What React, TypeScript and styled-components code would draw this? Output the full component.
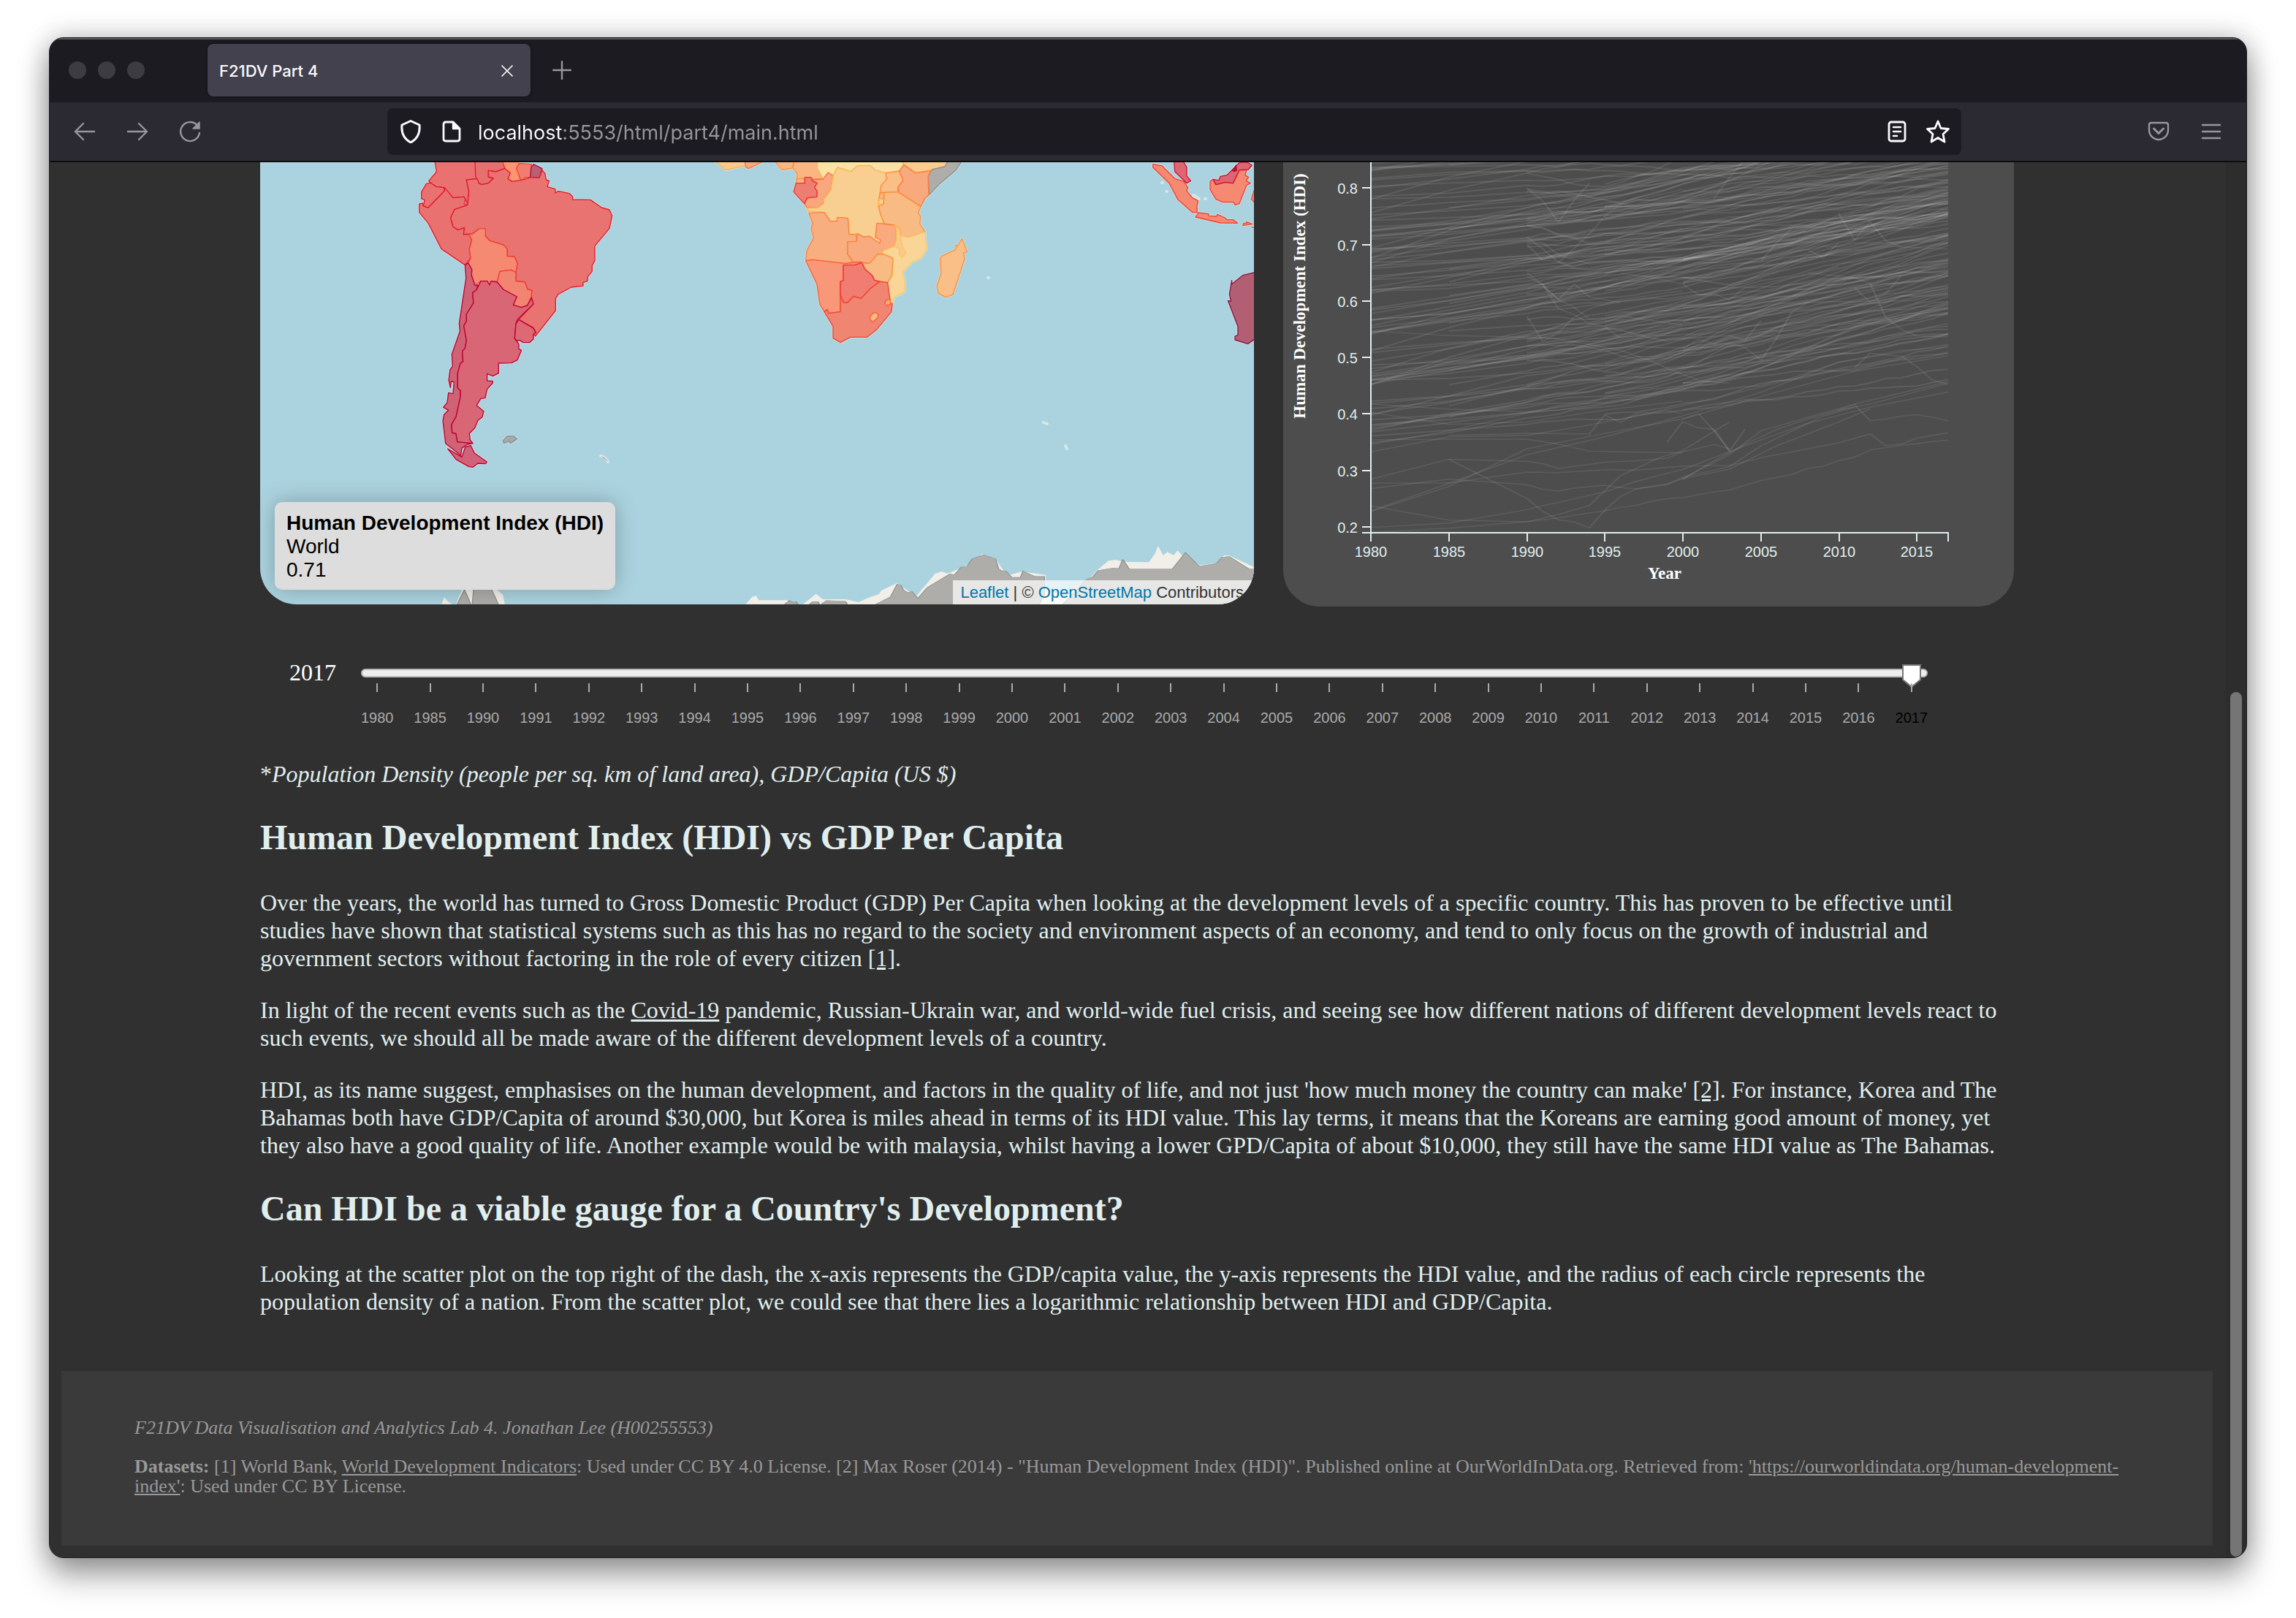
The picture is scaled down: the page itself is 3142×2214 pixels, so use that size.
import React, { useState } from "react";
import styled, { createGlobalStyle } from "styled-components";

const serif = `"Liberation Serif", "Times New Roman", serif`;
const sans = `"Liberation Sans", Helvetica, Arial, sans-serif`;
const chrome = `Inter, Roboto, sans-serif`;

const GlobalStyle = createGlobalStyle`
  *, *::before, *::after { box-sizing: border-box; }
  body { margin: 0; background: #fff; font-family: ${serif}; }
  h2, p { margin: 0; }
`;

/* ---------- browser window ---------- */

const Desktop = styled.div`
  padding: 51px 67px 83px;
`;

const BrowserWindow = styled.div`
  display: flex;
  flex-direction: column;
  border-radius: 20px;
  overflow: hidden;
  background: #303030;
  border: 1px solid #1b1b1b;
  box-shadow: inset 0 0 0 2px #5c5c5e, 0 24px 44px rgba(0, 0, 0, 0.36), 0 0 36px rgba(0, 0, 0, 0.24);
`;

const TabBar = styled.header`
  display: flex;
  align-items: center;
  gap: 24px;
  height: 88px;
  padding: 0 26px;
  background: #1c1b22;
  box-shadow: inset 0 2px 0 #5c5c5e;
`;

const TrafficLights = styled.div`
  display: flex;
  gap: 16px;
  width: 166px;
`;

const Light = styled.span`
  width: 24px;
  height: 24px;
  border-radius: 50%;
  background: #3d3c42;
`;

const Tab = styled.div`
  display: flex;
  align-items: center;
  justify-content: space-between;
  width: 442px;
  height: 72px;
  padding: 2px 16px 0;
  border-radius: 8px;
  background: #42414d;
  box-shadow: 0 0 4px rgba(0, 0, 0, 0.5);
  color: #fbfbfe;
  font: 500 22px ${chrome};
`;

const IconButton = styled.button<{ $tone?: string }>`
  display: flex;
  flex: none;
  padding: 0;
  border: 0;
  background: none;
  color: ${(p) => p.$tone ?? "#97969c"};
`;

const Toolbar = styled.nav`
  display: flex;
  align-items: center;
  justify-content: space-between;
  height: 82px;
  padding: 0 32px;
  background: #2b2a33;
  border-bottom: 2px solid #0c0c0d;
`;

const ToolGroup = styled.div<{ $end?: boolean }>`
  display: flex;
  gap: 40px;
  width: ${(p) => (p.$end ? 358 : 430)}px;
  justify-content: ${(p) => (p.$end ? "flex-end" : "flex-start")};
`;

const UrlBar = styled.div`
  display: flex;
  flex: 1;
  align-items: center;
  gap: 24px;
  height: 64px;
  padding: 0 16px;
  border-radius: 8px;
  background: #1c1b22;
`;

const UrlInput = styled.input`
  flex: 1;
  min-width: 0;
  height: 40px;
  margin-left: -4px;
  padding: 2px 0 0;
  border: 0;
  outline: 0;
  font: 400 27px ${chrome};
  color: transparent;
  background: linear-gradient(90deg, #fbfbfe 117px, #97969c 117px);
  -webkit-background-clip: text;
  background-clip: text;
`;

const Viewport = styled.div`
  display: flex;
  background: #303030;
`;

const Page = styled.div`
  flex: 1;
  padding: 0 18px 16px 16px;
`;

const ScrollTrack = styled.div`
  display: grid;
  grid-template-rows: 38fr 62fr;
  width: 28px;
  padding: 0 6px 1px;
  background: #2d2d2d;
`;

const ScrollThumb = styled.div`
  grid-row: 2;
  border-radius: 8px;
  background: #757575;
`;

/* ---------- article ---------- */

const Main = styled.main`
  max-width: 2400px;
  margin: 0 auto;
  color: #e0eeee;
`;

const Dashboard = styled.section`
  display: grid;
  grid-template-columns: 34fr 25fr;
  align-items: start;
  gap: 40px;
`;

const MapPanel = styled.div`
  position: relative;
  height: 605px;
  border-radius: 0 0 50px 50px;
  overflow: hidden;
  background: #abd3df;
`;

const Drawing = styled.svg`
  display: block;
  width: 100%;
  height: 100%;
`;

const MapInfo = styled.div`
  position: absolute;
  left: 20px;
  bottom: 20px;
  padding: 13px 16px 11px;
  border-radius: 10px;
  background: #ddd;
  box-shadow: 0 0 30px rgba(0, 0, 0, 0.25);
  color: #000;
  font: 28px/32px ${sans};
`;

const Attribution = styled.div`
  position: absolute;
  right: 0;
  bottom: 0;
  padding: 1px 14px 0 10px;
  background: rgba(255, 255, 255, 0.7);
  color: #333;
  font: 22px/32px ${sans};
  white-space: nowrap;
`;

const MapLink = styled.a`
  color: #0078a8;
  text-decoration: none;
`;

const ChartPanel = styled.div`
  height: 608px;
  border-radius: 0 0 50px 50px;
  overflow: hidden;
  background: #4d4d4d;
`;

const AxisText = styled.text`
  font: 20px ${sans};
  fill: #e0eeee;
`;

const AxisTitle = styled.text`
  font: bold 23px ${serif};
  fill: #fff;
  text-anchor: middle;
`;

const YearControl = styled.section`
  display: flex;
  padding: 71px 118px 47px 40px;
`;

const YearLabel = styled.label`
  width: 98px;
  color: #fff;
  font-size: 32px;
  line-height: 38px;
`;

const Slider = styled.div`
  flex: 1;
  padding-top: 14px;
`;

const Rail = styled.div`
  display: flex;
  align-items: flex-start;
  height: 12px;
  padding: 0 7px;
  border: 2px solid #bbb;
  border-radius: 6px;
  background: #eee;
`;

const thumbImage = `url("data:image/svg+xml,%3Csvg xmlns='http://www.w3.org/2000/svg' width='26' height='32'%3E%3Cpath d='M1 1H25V21L13 31L1 21Z' fill='white' stroke='%23777' stroke-width='2'/%3E%3C/svg%3E")`;

const Range = styled.input`
  appearance: none;
  flex: 1;
  height: 32px;
  margin: -8px 0;
  background: none;
  &::-webkit-slider-runnable-track {
    height: 32px;
    background: none;
  }
  &::-webkit-slider-thumb {
    appearance: none;
    width: 26px;
    height: 32px;
    background: ${thumbImage};
  }
`;

const Ticks = styled.div`
  display: grid;
  grid-template-columns: repeat(30, 1fr);
  margin: 8px -14px 0;
`;

const Tick = styled.span<{ $active: boolean }>`
  display: flex;
  flex-direction: column;
  align-items: center;
  gap: 24px;
  color: ${(p) => (p.$active ? "#000" : "#aaa")};
  font: 20px/22px ${sans};
  &::before {
    content: "";
    width: 2px;
    height: 12px;
    background: #aaa;
  }
`;

const Text = styled.p`
  font-size: 32px;
  line-height: 38px;
  & + & {
    margin-top: 33px;
  }
`;

const Heading = styled.h2`
  margin: 40px 0 42px;
  font-size: 48px;
  line-height: 56px;
`;

const TextLink = styled.a`
  color: inherit;
`;

const Footer = styled.footer`
  display: grid;
  gap: 26px;
  margin-top: 76px;
  padding: 64px 100px 68px;
  background: #3a3a3a;
  color: #999;
  font-size: 26px;
  line-height: 27px;
`;

/* ---------- icons ---------- */

const Icon = ({ children, size = 32 }: { children: React.ReactNode; size?: number }) => (
  <svg width={size} height={size} viewBox="0 0 32 32" fill="none" stroke="currentColor" strokeWidth="2.4" strokeLinecap="round" strokeLinejoin="round" aria-hidden="true">
    {children}
  </svg>
);

/* ---------- map ---------- */

type Shape = [points: string, fill: string, stroke: string];

const brick = "#e31a2c";
const crimson = "#bd0030";
const orange = "#fc8d3c";
const amber = "#fdb04c";
const tomato = "#f04030";

const southAmerica: Shape[] = [
  ["163,20 172,75 140,112 147,120 170,136 203,140 240,182 285,178 292,190 299,212 305,158 295,108 340,104 332,92 335,60 330,20", "#e97270", brick],
  ["330,20 332,92 340,118 358,128 385,122 406,102 385,96 385,70 415,75 453,62 440,20", "#e4706f", brick],
  ["440,20 455,56 475,80 465,104 482,115 518,110 500,76 512,20", "#fb9574", orange],
  ["512,40 500,60 518,110 532,106 536,98 558,98 562,44", "#ef7d70", tomato],
  ["570,44 606,62 594,100 558,98 560,60", "#bb5f73", "#a0103c"],
  ["147,120 170,136 203,140 205,154 138,223 118,216 123,190 110,186 110,158 130,124", "#e97270", brick],
  ["205,140 240,182 285,178 292,190 285,206 299,212 246,230 230,264 240,300 260,314 287,304 283,332 305,332 317,354 307,392 312,430 289,458 192,392 138,286 101,242 101,207 115,204 118,216 138,223 205,154", "#e97270", brick],
  ["295,108 340,104 345,122 358,128 385,122 406,102 385,96 385,70 415,75 453,62 475,80 465,104 482,115 518,110 532,106 558,98 594,100 606,68 618,82 622,108 635,112 627,136 660,146 660,162 672,154 718,164 731,176 731,189 804,190 850,222 882,231 893,256 882,308 822,380 822,440 811,460 811,484 793,506 792,524 774,530 774,544 726,549 672,578 661,596 661,645 578,750 570,741 580,735 570,716 510,682 568,620 560,592 564,562 546,558 535,528 498,524 498,486 504,450 492,424 462,422 462,392 448,376 390,358 373,340 373,308 348,308 318,330 283,332 287,304 260,314 240,300 230,264 246,230 299,212 305,158", "#e87370", brick],
  ["305,332 320,330 348,308 373,308 373,340 390,358 448,376 462,392 462,422 492,424 504,450 498,488 478,478 432,484 421,526 396,524 390,540 380,524 354,524 330,542 316,500 317,476 302,450 312,430 307,392 317,354", "#f58972", tomato],
  ["432,484 478,478 498,488 498,524 535,528 546,558 564,562 560,592 545,624 521,632 487,622 502,588 446,558 421,528", "#f28472", tomato],
  ["289,458 302,450 317,476 316,500 330,542 342,540 336,560 320,572 324,614 295,660 295,688 284,708 295,768 289,800 278,812 281,854 270,862 259,902 259,962 271,974 270,1000 252,1082 234,1112 236,1146 252,1150 258,1184 322,1190 300,1194 276,1210 272,1240 209,1190 198,1096 203,1072 221,1054 200,1042 216,1022 221,982 240,986 244,938 232,936 229,962 222,930 228,886 238,874 235,824 268,730 265,698 293,512", "#cf6274", crimson],
  ["354,524 380,524 390,540 396,524 421,528 446,558 502,588 487,622 521,632 545,624 562,592 570,618 504,682 498,700 493,760 510,782 510,802 521,808 504,848 480,860 427,861 427,902 403,914 380,904 380,933 403,934 403,942 380,968 372,1004 354,1006 337,1034 366,1058 360,1082 342,1096 330,1126 307,1150 310,1176 322,1190 258,1184 252,1150 236,1146 234,1112 252,1082 270,1000 271,974 259,962 259,902 270,862 281,854 278,812 289,800 295,768 284,708 295,688 295,660 324,614 320,572 336,560", "#d96674", crimson],
  ["510,682 568,716 580,735 570,741 570,762 554,776 528,776 512,766 504,770 493,760 498,700", "#de6873", crimson],
  ["218,1212 276,1246 290,1206 312,1198 328,1230 379,1266 374,1274 342,1272 322,1288 305,1286 252,1256", "#d0627a", crimson],
  ["444,1180 462,1160 490,1160 503,1172 476,1190 470,1182 449,1190", "#a4a9aa", "#8b9092"],
];

const africa: Shape[] = [
  ["40,20 100,68 178,50 178,20", "#fbc98a", amber],
  ["178,20 181,56 193,62 248,36 248,20", "#f9a77e", "#fb6e3c"],
  ["290,20 330,68 372,60 385,20", "#f9b882", orange],
  ["385,20 374,58 394,86 390,104 498,104 478,60 480,20", "#f9b582", orange],
  ["480,20 478,60 500,102 520,78 540,92 558,57 612,74 640,50 695,50 712,68 756,80 812,72 830,44 815,20", "#f9e2a4", "#fbe08a"],
  ["812,20 830,44 878,80 942,70 998,54 1020,20", "#fbcc8c", amber],
  ["1020,20 998,54 946,66 930,94 935,170 980,122 1045,68 1070,30", "#aeadaa", "#8e8e8e"],
  ["390,104 424,104 424,122 388,122", "#f9b582", orange],
  ["520,78 540,92 530,150 500,190 502,204 476,224 432,222 422,206 434,184 474,178 474,154 464,140 474,122 450,108 498,106", "#f8a77e", "#fb7040"],
  ["424,98 450,98 454,112 474,122 464,140 474,154 474,178 434,182 422,206 378,158 388,122 424,122", "#ef7e72", "#ee3030"],
  ["558,57 612,74 640,50 695,50 712,68 756,80 760,106 738,130 733,160 727,190 727,218 735,250 750,288 720,286 714,344 734,354 732,370 690,340 664,342 640,328 606,332 601,266 558,262 556,278 528,278 504,242 440,238 432,224 476,224 502,204 500,190 530,150 540,92", "#f8cf90", amber],
  ["756,80 812,72 828,110 806,140 806,158 750,160 733,162 738,130 760,106", "#f9bf86", orange],
  ["830,46 878,80 942,70 930,94 933,170 918,184 900,218 810,160 806,140 828,110 812,72", "#f9a97e", "#fb7a3c"],
  ["733,162 750,160 748,185 728,188", "#f9b582", orange],
  ["728,188 748,186 748,206 736,218 727,216", "#f9cf90", amber],
  ["750,160 806,158 900,218 890,244 900,260 896,288 918,322 852,344 818,340 814,308 790,294 750,288 735,250 727,218 748,206", "#f9bb84", orange],
  ["440,244 504,242 528,278 556,278 558,262 601,266 606,332 637,334 635,362 600,362 600,414 622,444 590,452 456,436 428,440 432,398 460,346 450,310 456,286", "#f9ae80", "#fb8040"],
  ["720,286 790,294 799,310 799,354 790,382 745,400 745,412 722,414 690,452 660,446 622,444 600,414 600,362 635,362 640,328 664,342 690,340 732,370 734,354 714,344", "#f9ab7f", "#fb8040"],
  ["790,294 814,308 822,372 840,394 838,412 824,428 812,418 812,390 790,380 799,354 799,310", "#f9c98c", amber],
  ["818,340 852,344 918,322 924,394 900,430 864,446 826,488 835,526 834,568 792,590 784,616 774,616 764,528 782,500 786,430 772,420 745,412 745,400 790,382 812,390 812,418 824,428 840,408 822,372", "#f9d597", "#fcc860"],
  ["664,450 690,452 722,414 750,414 786,430 782,500 764,530 710,520 700,500 670,474", "#f9bb84", orange],
  ["428,440 456,436 590,452 650,446 655,452 630,458 582,458 582,522 570,526 570,650 522,656 516,640 504,650 486,620 474,538", "#f99878", "#fa5c38"],
  ["582,458 630,458 658,448 670,474 700,500 710,520 732,526 692,556 655,596 625,586 600,612 582,612 570,580 570,526 582,522", "#f07c72", "#ee3030"],
  ["732,526 764,530 774,600 774,616 784,616 780,650 720,722 680,754 612,754 570,776 540,758 540,710 504,650 516,640 522,656 570,650 570,580 582,612 600,612 625,586 655,596 692,556", "#f08572", "#f04530"],
  ["774,598 758,602 752,614 762,626 776,618", "#f9a97e", "#fa5c38"],
  ["692,668 710,652 726,660 722,676 702,692 692,682", "#f9bb84", "#fa5c38"],
  ["1070,350 1091,404 1076,410 1080,434 1032,580 1002,590 972,574 966,544 984,490 979,436 984,422 1044,394 1044,376 1052,378", "#f9bf86", orange],
];

const asia: Shape[] = [
  ["233,45 270,50 323,103 360,115 377,140 372,154 395,182 419,194 414,216 415,242 396,242 336,190 300,122 233,57", "#f58972", tomato],
  ["319,20 323,74 372,122 389,112 372,92 372,56 350,20", "#dd6672", "#d01030"],
  ["468,114 480,106 492,128 530,118 562,122 588,68 618,68 612,88 626,98 616,112 634,122 618,130 588,206 570,212 564,200 520,200 492,188 468,148", "#f58972", tomato],
  ["480,106 504,110 510,94 538,88 590,36 620,36 640,48 625,66 588,68 562,122 530,118 492,128", "#dd6672", "#d01030"],
  ["560,70 575,48 577,70 566,74", "#b81030", "#b81030"],
  ["408,261 420,243 462,248 462,256 494,258 498,250 530,264 536,272 564,272 581,286 510,285", "#f58972", tomato],
  ["602,296 606,286 618,286 618,280 641,290", "#f58972", tomato],
  ["652,140 637,188 652,204", "#f58972", tomato],
  ["638,302 652,306", "none", tomato],
  ["652,488 602,500 557,536 557,520 547,578 554,606 541,604 582,710 582,745 570,750 570,765 623,782 652,762", "#b25f74", "#8c1240"],
];

const snow = [
  "762,500 772,470 778,466 782,484 826,484 836,500",
  "850,500 870,458 880,480 915,480 935,492 952,472 966,460 970,444 994,414 1010,444 1024,466 1052,376 1062,366 1072,374 1100,342 1125,294 1145,314 1156,358 1166,380 1186,366 1222,380 1222,440 1250,470 1290,392 1300,362 1318,322 1330,318 1340,326 1380,328 1390,290 1394,260 1402,300 1408,286 1418,300 1424,280 1432,304 1446,318 1458,340 1483,332 1495,300 1503,300 1541,348 1541,500",
  "296,500 300,472 306,490 312,500",
  "318,500 328,436 376,430 390,462 393,500",
];

const ice = [
  "320,500 331,440 341,500",
  "343,500 345,440 372,436 383,500",
  "822,500 829,485 834,492 840,490 842,500",
  "860,500 865,490 873,490 875,500",
  "878,500 886,485 915,488 918,500",
  "962,500 984,470 994,418 1000,422 1004,442 1010,452 1017,448 1026,476 1040,432 1075,376 1082,380 1092,348 1101,346 1109,314 1127,297 1145,314 1150,356 1154,362 1161,364 1170,390 1183,390 1187,364 1205,386 1220,386 1220,460 1212,500",
  "1248,500 1284,400 1294,388 1302,362 1326,352 1334,354 1340,316 1350,356 1416,356 1436,288 1457,344 1483,334 1492,308 1503,304 1534,356 1545,356 1545,500",
];

const Shapes = ({ shapes, x }: { shapes: Shape[]; x: number }) => (
  <g transform={`translate(${x} -12) scale(0.33333)`} strokeLinejoin="round">
    {shapes.map(([points]) => (
      <polygon key={"h" + points} points={points} fill="none" stroke="#e9f1ef" strokeOpacity="0.5" strokeWidth="9" />
    ))}
    {shapes.map(([points, fill, stroke]) => (
      <polygon key={points} points={points} fill={fill} stroke={stroke} strokeWidth="4" />
    ))}
  </g>
);

const WorldMap = () => (
  <Drawing viewBox="0 0 1360 605" preserveAspectRatio="xMidYMin slice" role="img" aria-label="Choropleth map">
    <Shapes shapes={southAmerica} x={184} />
    <Shapes shapes={africa} x={604} />
    <Shapes shapes={asia} x={1144} />
    <path d="M466 402q6 1 10 8M1072 356l5 2M1102 388l2 4M1234 28h1M1240 40h1M1277 45l8 5M1293 50h1M996 158h1" stroke="#e9efec" strokeOpacity="0.7" strokeWidth="4" strokeLinecap="round" />
    <g transform="translate(-16 438) scale(0.8929 0.33333)">
      {snow.map((p) => <polygon key={p} points={p} fill="#f2efe9" />)}
      {ice.map((p) => <polygon key={p} points={p} fill="#aeadaa" stroke="#8e8e8c" strokeWidth="1.5" />)}
    </g>
  </Drawing>
);

/* ---------- line chart ---------- */

const traces = [
  "205,1270 366,1256 527,1234 592,1222 656,1205 688,1198 720,1186 752,1180 784,1166 816,1157 848,1154 913,1134 945,1128 1010,1096 1074,1076 1106,1056 1138,1048 1170,1030 1203,1018 1235,994 1300,978 1332,973 1364,966 1396,961",
  "205,1181 366,1229 527,1235 592,1210 656,1180 720,1080 800,1020 848,996 945,900",
  "205,1254 366,1239 527,1194 560,1180 592,1170 688,1134 752,1100 816,1072 848,1060 945,1000 1010,960 1106,905 1235,850 1396,800",
  "205,1198 366,1106 527,1010 688,950 848,880 1010,800 1170,700 1396,640",
  "205,1200 366,1116 527,990 688,938 848,890 1042,800 1203,730 1396,678",
  "205,1105 366,1105 527,1068 592,1070 688,1060 752,1062 848,1048 945,1046 1010,1020 1170,970 1235,940 1267,979 1300,974 1332,954 1396,936",
  "366,1025 527,1157 560,1200 592,1228 624,1235 656,1255 688,1195 720,1150 752,1125 816,1110 848,1085 945,1050 1010,980 1074,930 1138,880 1203,850",
  "205,1123 366,1092 527,1110 560,1126 592,1131 624,1122 688,1112 720,1120 752,1124 816,1108 848,1090 945,1058 1042,980 1170,900 1235,856",
  "205,1092 366,1025 527,1032 560,1040 592,1056 688,1035 752,1030 816,1022 848,1000 913,976 945,990",
  "205,1000 366,950 527,945 656,910 784,870 913,820 1042,770 1170,700 1300,660 1396,650",
  "205,975 366,930 527,870 656,850 784,810 913,770 1042,700 1170,650 1300,600 1396,570",
  "366,945 527,938 656,940 688,876 720,902 752,872 816,862 848,872",
  "205,960 366,958 527,958 592,974 656,998 720,1000 848,1004",
  "816,968 848,900 881,920 913,924 945,998 977,924",
  "848,890 881,872 913,930 945,996",
  "205,840 366,857 527,866 592,860 720,830 848,780 945,740",
  "205,868 366,908 527,900 688,860 848,830",
  "205,595 366,610 527,616 592,622 656,640 720,660 784,696 816,720 848,740 881,760 913,766 945,770",
  "527,546 560,630 592,600 624,550 656,520 720,490 848,460",
  "527,240 560,252 592,270 624,285 656,305 720,300 848,290",
  "527,243 560,248 592,275 624,280 656,300 720,290 848,250",
  "527,280 560,320 592,365 624,385 656,390 848,350",
  "527,296 560,300 592,340 624,355 656,370 848,340",
  "527,305 560,358 592,362 624,380 656,364 848,360",
  "527,400 560,440 592,520 624,540 656,570 688,580 720,620 752,610 848,585",
  "527,455 560,445 592,490 624,515 656,555 720,545 848,575",
  "527,412 560,440 592,490 624,438 656,480 720,500",
  "527,115 560,160 592,230 624,158 656,100",
  "592,365 624,318 656,270 688,210 720,170 848,120",
  "848,655 881,624 913,638 945,610 977,626 1010,560",
  "913,640 945,636 977,650 1010,692 1042,620 1074,530 1106,500",
  "720,402 784,415 848,438 881,474 913,470 945,490 977,450 1170,380",
  "1010,360 1042,300 1074,250",
  "1106,322 1138,350 1170,300",
  "1170,200 1203,290 1235,230 1267,292 1300,314 1396,320",
  "1106,400 1203,416 1235,435 1267,548 1300,590 1332,612 1396,615",
  "1203,450 1235,498 1267,470 1300,408",
  "1203,718 1235,670 1300,680 1332,715 1364,760 1396,774",
  "1170,860 1203,842 1235,896 1267,890 1300,880 1332,876 1364,884 1396,896",
  "848,1093 881,1060 913,1030 977,975 1042,925 1106,890 1170,860 1235,840 1396,770",
  "848,1090 945,1010 1010,930 1074,900 1203,840 1396,765",
  "848,357 913,335 977,318 1042,310 1106,285 1203,262 1396,200",
  "848,360 945,325 1042,312 1106,290 1203,265 1396,205",
  "720,380 848,355 945,322 1042,305 1170,270",
  "848,770 945,760 1042,700 1138,630 1235,560 1396,515",
  "848,768 913,765 1010,720 1106,650 1203,580 1396,520",
  "913,150 945,80 977,20",
];

const random = (() => {
  let seed = 20170;
  return () => {
    seed = (seed * 16807) % 2147483647;
    return seed / 2147483647;
  };
})();

const years = [1980, 1985, ...Array.from({ length: 28 }, (_, i) => 1990 + i)];
const firstYears = [1980, 1980, 1985, 1980, 1990, 1980, 1980, 1995, 1980, 2000];
const xOf = (year: number) => 120 + (year - 1980) * 21.35;
const yOf = (value: number) => 499 - (value - 0.2) * 773;

const series = Array.from({ length: 190 }, (_, i) => {
  const first = firstYears[i % 10];
  const base = 0.33 + 0.6 * Math.pow(random(), 0.8);
  const growth = 0.11 + random() * 0.16 - Math.max(0, base - 0.55) * 0.32;
  const curve = 0.7 + random() * 0.9;
  const dip = first === 1990 ? random() * 0.05 : random() * 0.012;
  const center = 1993 + random() * 12;
  let drift = 0;
  return years
    .filter((y) => y >= first)
    .map((y) => {
      drift += (random() - 0.5) * 0.008;
      const t = (y - 1980) / 37;
      const v = base + growth * Math.pow(t, curve) - dip * Math.exp(-Math.pow((y - center) / 4, 2)) + drift;
      return `${xOf(y).toFixed(1)},${yOf(v).toFixed(1)}`;
    })
    .join(" ");
});

const LineChart = () => (
  <Drawing viewBox="0 0 1000 608" preserveAspectRatio="xMinYMin meet" role="img" aria-label="Human Development Index by year">
    <g fill="none" stroke="#fff" strokeOpacity="0.09" strokeWidth="2" strokeLinejoin="round">
      {series.map((p, i) => <polyline key={i} points={p} />)}
      <g transform="translate(-16 -12) scale(0.6633 0.4082)" strokeWidth="3.6">
        {traces.map((p) => <polyline key={p} points={p} />)}
      </g>
    </g>
    <path d="M120 0V507M108 507H910V519" fill="none" stroke="#e0eeee" strokeWidth="2" />
    {[0.8, 0.7, 0.6, 0.5, 0.4, 0.3, 0.2].map((v) => (
      <g key={v}>
        <path d={`M108 ${Math.round(yOf(v))}h12`} stroke="#e0eeee" strokeWidth="2" />
        <AxisText x="102" y={Math.round(yOf(v)) + 8} textAnchor="end">{v.toFixed(1)}</AxisText>
      </g>
    ))}
    {[1980, 1985, 1990, 1995, 2000, 2005, 2010, 2015].map((y) => (
      <g key={y}>
        <path d={`M${Math.round(xOf(y))} 507v12`} stroke="#e0eeee" strokeWidth="2" />
        <AxisText x={Math.round(xOf(y))} y="540" textAnchor="middle">{y}</AxisText>
      </g>
    ))}
    <AxisTitle x="522" y="570">Year</AxisTitle>
    <AxisTitle transform="translate(30 183) rotate(-90)">Human Development Index (HDI)</AxisTitle>
  </Drawing>
);

/* ---------- page ---------- */

export default function App() {
  const [index, setIndex] = useState(years.length - 1);

  return (
    <>
      <GlobalStyle />
      <Desktop>
        <BrowserWindow>
          <TabBar>
            <TrafficLights><Light /><Light /><Light /></TrafficLights>
            <Tab>
              F21DV Part 4
              <IconButton $tone="#fbfbfe" aria-label="Close tab">
                <Icon><path d="M9 9L23 23M23 9L9 23" strokeWidth="1.7" /></Icon>
              </IconButton>
            </Tab>
            <IconButton aria-label="New tab">
              <Icon size={38}><path d="M16 6V26M6 16H26" strokeWidth="2" /></Icon>
            </IconButton>
          </TabBar>
          <Toolbar>
            <ToolGroup>
              <IconButton aria-label="Back"><Icon><path d="M29 16H3M14 5L3 16L14 27" /></Icon></IconButton>
              <IconButton aria-label="Forward"><Icon><path d="M3 16H29M18 5L29 16L18 27" /></Icon></IconButton>
              <IconButton aria-label="Reload">
                <Icon><path d="M29 18A13 13 0 1 1 25.500 7L28 11" /><path d="M29 3V12H20Z" fill="currentColor" strokeWidth="1.500" /></Icon>
              </IconButton>
            </ToolGroup>
            <UrlBar>
              <IconButton $tone="#fbfbfe" aria-label="Tracking protection">
                <Icon><path d="M16 1.500L28 7C29 17 25 26 16 31C7 26 3 17 4 7Z" strokeWidth="3" /></Icon>
              </IconButton>
              <IconButton $tone="#fbfbfe" aria-label="Site information">
                <Icon><path d="M8 3H18L27 12V26Q27 29 24 29H8Q5 29 5 26V6Q5 3 8 3Z" strokeWidth="2.800" /><path d="M18 3V12H27Z" fill="currentColor" /></Icon>
              </IconButton>
              <UrlInput aria-label="Address" defaultValue="localhost:5553/html/part4/main.html" />
              <IconButton $tone="#fbfbfe" aria-label="Reader view">
                <Icon><rect x="5" y="3" width="22" height="26" rx="3" strokeWidth="2.800" /><path d="M11 10H21M11 16H21M11 22H16" strokeWidth="2.600" /></Icon>
              </IconButton>
              <IconButton $tone="#fbfbfe" aria-label="Bookmark this page">
                <Icon><path d="M16 2L20 11.500L30.500 12.500L23 19.500L25 30L16 24.500L7 30L9 19.500L1.500 12.500L12 11.500Z" strokeWidth="2.800" /></Icon>
              </IconButton>
            </UrlBar>
            <ToolGroup $end>
              <IconButton aria-label="Save to Pocket">
                <Icon><path d="M6 4H26Q29 4 29 7V14A13 13 0 0 1 3 14V7Q3 4 6 4Z" /><path d="M9.500 12L16 18.500L22.500 12" strokeWidth="3" /></Icon>
              </IconButton>
              <IconButton aria-label="Menu"><Icon><path d="M4 7H28M4 16H28M4 25H28" /></Icon></IconButton>
            </ToolGroup>
          </Toolbar>
          <Viewport>
            <Page>
              <Main>
                <Dashboard>
                  <MapPanel>
                    <WorldMap />
                    <MapInfo><b>Human Development Index (HDI)</b><br />World<br />0.71</MapInfo>
                    <Attribution>
                      <MapLink href="#leaflet">Leaflet</MapLink> | © <MapLink href="#osm">OpenStreetMap</MapLink> Contributors
                    </Attribution>
                  </MapPanel>
                  <ChartPanel><LineChart /></ChartPanel>
                </Dashboard>
                <YearControl>
                  <YearLabel htmlFor="year">{years[index]}</YearLabel>
                  <Slider>
                    <Rail>
                      <Range id="year" type="range" min={0} max={years.length - 1} value={index} onChange={(e) => setIndex(Number(e.target.value))} />
                    </Rail>
                    <Ticks>
                      {years.map((y, i) => <Tick key={y} $active={i === index}>{y}</Tick>)}
                    </Ticks>
                  </Slider>
                </YearControl>
                <Text>*<i>Population Density (people per sq. km of land area), GDP/Capita (US $)</i></Text>
                <Heading>Human Development Index (HDI) vs GDP Per Capita</Heading>
                <Text>
                  Over the years, the world has turned to Gross Domestic Product (GDP) Per Capita when looking at the development levels of a specific country. This has proven to be effective until studies have shown that statistical systems such as this has no regard to the society and environment aspects of an economy, and tend to only focus on the growth of industrial and government sectors without factoring in the role of every citizen <TextLink href="#ref1">[1]</TextLink>.
                </Text>
                <Text>
                  In light of the recent events such as the <TextLink href="#covid">Covid-19</TextLink> pandemic, Russian-Ukrain war, and world-wide fuel crisis, and seeing see how different nations of different development levels react to such events, we should all be made aware of the different development levels of a country.
                </Text>
                <Text>
                  HDI, as its name suggest, emphasises on the human development, and factors in the quality of life, and not just 'how much money the country can make' <TextLink href="#ref2">[2]</TextLink>. For instance, Korea and The Bahamas both have GDP/Capita of around $30,000, but Korea is miles ahead in terms of its HDI value. This lay terms, it means that the Koreans are earning good amount of money, yet they also have a good quality of life. Another example would be with malaysia, whilst having a lower GPD/Capita of about $10,000, they still have the same HDI value as The Bahamas.
                </Text>
                <Heading>Can HDI be a viable gauge for a Country's Development?</Heading>
                <Text>
                  Looking at the scatter plot on the top right of the dash, the x-axis represents the GDP/capita value, the y-axis represents the HDI value, and the radius of each circle represents the population density of a nation. From the scatter plot, we could see that there lies a logarithmic relationship between HDI and GDP/Capita.
                </Text>
              </Main>
              <Footer>
                <p><i>F21DV Data Visualisation and Analytics Lab 4. Jonathan Lee (H00255553)</i></p>
                <p>
                  <b>Datasets:</b> [1] World Bank, <TextLink href="#wdi">World Development Indicators</TextLink>: Used under CC BY 4.0 License. [2] Max Roser (2014) - "Human Development Index (HDI)". Published online at OurWorldInData.org. Retrieved from: <TextLink href="#owid">'https://ourworldindata.org/human-development-index'</TextLink>: Used under CC BY License.
                </p>
              </Footer>
            </Page>
            <ScrollTrack><ScrollThumb /></ScrollTrack>
          </Viewport>
        </BrowserWindow>
      </Desktop>
    </>
  );
}
